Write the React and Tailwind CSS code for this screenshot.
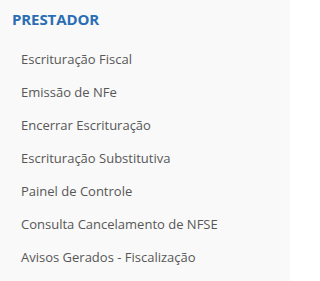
export default function App() {
  const items = [
    "Escrituração Fiscal",
    "Emissão de NFe",
    "Encerrar Escrituração",
    "Escrituração Substitutiva",
    "Painel de Controle",
    "Consulta Cancelamento de NFSE",
    "Avisos Gerados - Fiscalização",
  ];
  return (
    <div className="w-[290px] h-[281px] bg-[#f9f9f9] overflow-hidden" style={{ fontFamily: '"Open Sans", "Segoe UI", sans-serif' }}>
      <div className="pl-3 pt-[9px] text-[15px] leading-[20px] font-bold text-[#2a6db5] tracking-[-0.1px]">PRESTADOR</div>
      <ul className="pt-[21px]">
        {items.map((t) => (
          <li key={t} className="pl-[21px] h-[33px] text-[13px] leading-[18px] text-[#575757]">{t}</li>
        ))}
      </ul>
    </div>
  );
}
